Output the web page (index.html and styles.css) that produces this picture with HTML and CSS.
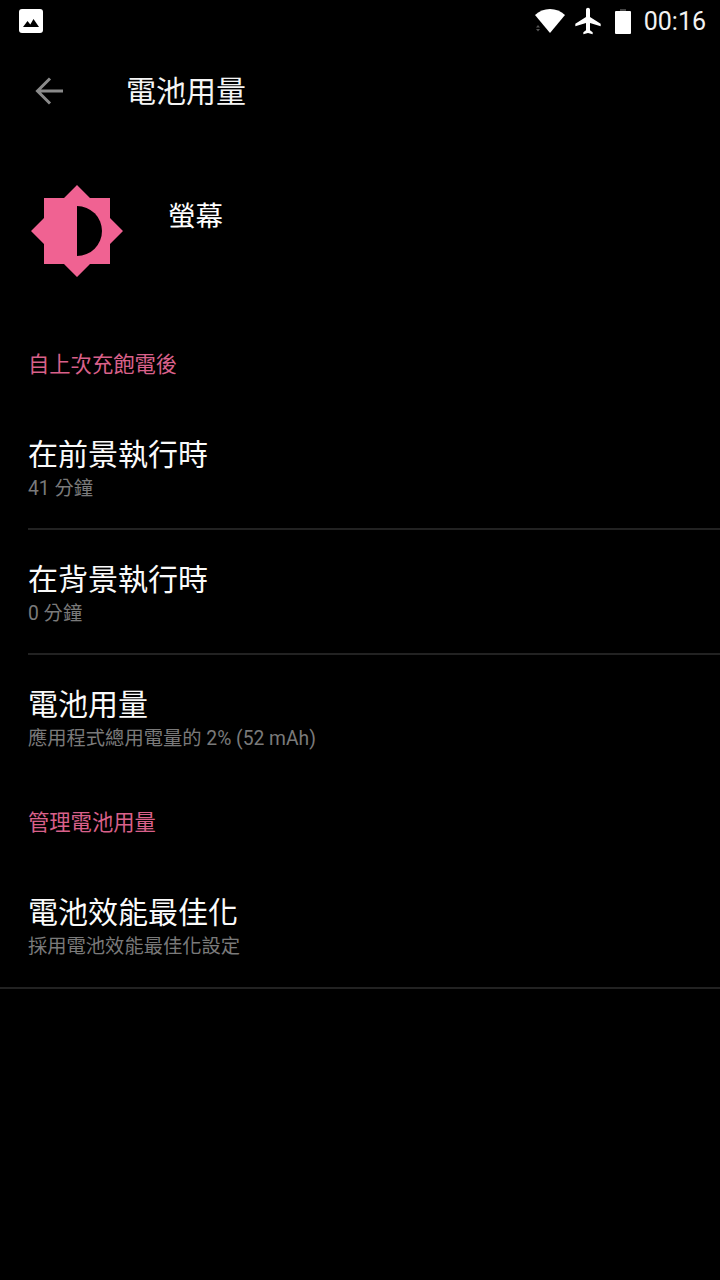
FILE: index.html
```html
<!DOCTYPE html>
<html lang="zh-Hant">
<head>
  <meta charset="UTF-8">
  <meta name="viewport" content="width=device-width, initial-scale=1.0">
  <title>電池用量</title>
  <link rel="stylesheet" href="styles.css">
</head>
<body>

  <div class="status-bar">
    <svg class="icon-picture" width="24" height="24" viewBox="0 0 24 24">
      <path fill="#fff" d="M3 0h18a3 3 0 0 1 3 3v18a3 3 0 0 1-3 3H3a3 3 0 0 1-3-3V3a3 3 0 0 1 3-3z"/>
      <path fill="#000" d="M4 18l4.500-6 2.800 3.400 3.200-5.400 5.500 8z"/>
    </svg>
    <div class="status-right">
      <svg class="icon-wifi" width="30" height="24" viewBox="0 0 30 24">
        <path fill="#fff" d="M0 6C4 2.300 9.300 0 15 0s11 2.300 15 6L15 24z"/>
        <path fill="#555" d="M1 18.500l2-2.500 2 2.500zM1 20h4l-2 2.500z"/>
      </svg>
      <svg class="icon-plane" width="32" height="32" viewBox="0 0 24 24">
        <path fill="#fff" d="M21.500 16v-2L13.500 9V3.500C13.500 2.670 12.830 2 12 2s-1.500.67-1.500 1.500V9l-8 5v2l8-2.500V19l-2 1.500V22l3.500-1 3.500 1v-1.500L13.500 19v-5.500z"/>
      </svg>
      <svg class="icon-battery" width="16" height="25" viewBox="0 0 16 25">
        <path fill="#444" d="M5 0h6v2H5z"/>
        <path fill="#fff" d="M1 2h14a1 1 0 0 1 1 1v21a1 1 0 0 1-1 1H1a1 1 0 0 1-1-1V3a1 1 0 0 1 1-1z"/>
      </svg>
      <span class="clock">00:16</span>
    </div>
  </div>

  <div class="toolbar">
    <svg class="icon-back" width="29" height="28" viewBox="0 0 29 28">
      <path fill="none" stroke="#8a8a8a" stroke-width="3" d="M28 14H3M15 1.500L2.500 14 15 26.500"/>
    </svg>
    <h1 class="toolbar-title">電池用量</h1>
  </div>

  <div class="app-header">
    <svg class="app-icon" width="92" height="92" viewBox="0 0 92 92">
      <path fill="#f06292" d="M46 0l13 13h20v20l13 13-13 13v20H59L46 92 33 79H13V59L0 46l13-13V13h20z"/>
      <path fill="#000" d="M46 21a25 25 0 0 1 0 50z"/>
    </svg>
    <div class="app-name">螢幕</div>
  </div>

  <div class="section-title first">自上次充飽電後</div>

  <div class="row">
    <div class="row-title">在前景執行時</div>
    <div class="row-sub">41 分鐘</div>
  </div>
  <div class="row">
    <div class="row-title">在背景執行時</div>
    <div class="row-sub">0 分鐘</div>
  </div>
  <div class="row last">
    <div class="row-title">電池用量</div>
    <div class="row-sub">應用程式總用電量的 2% (52 mAh)</div>
  </div>

  <div class="section-title">管理電池用量</div>

  <div class="row full">
    <div class="row-title">電池效能最佳化</div>
    <div class="row-sub">採用電池效能最佳化設定</div>
  </div>

</body>
</html>
```

FILE: styles.css
```css
body {
  margin: 0;
  height: 1280px;
  overflow: hidden;
  background-color: #000;
  color: #fff;
  font-family: Roboto, "Noto Sans CJK TC", sans-serif;
}

.status-bar {
  height: 42px;
  display: flex;
  align-items: center;
  justify-content: space-between;
  padding: 0 14px 0 19px;
}

.status-right {
  display: flex;
  align-items: center;
}

.icon-wifi {
  margin-right: 7px;
}

.icon-plane {
  margin-right: 11px;
}

.icon-battery {
  margin-right: 13px;
}

.clock {
  font-size: 25px;
  color: #f2f2f2;
}

.toolbar {
  height: 98px;
  display: flex;
  align-items: center;
  padding-left: 35px;
}

.icon-back {
  margin-right: 62px;
}

.toolbar-title {
  margin: 0 0 4px;
  font-size: 30px;
  font-weight: 400;
  color: #f5f5f5;
}

.app-header {
  display: flex;
  align-items: flex-start;
  padding: 45px 0 0 31px;
}

.app-name {
  margin: 12px 0 0 45px;
  font-size: 27.500px;
  line-height: 40px;
}

.section-title {
  margin: 0 0 0 28px;
  padding-top: 41px;
  font-size: 21.300px;
  line-height: 32px;
  color: #d9608a;
}

.section-title.first {
  padding-top: 72px;
}

.row {
  margin-left: 28px;
  height: 125px;
  box-sizing: border-box;
  padding-top: 28px;
  border-bottom: 2px solid #222;
}

.section-title + .row {
  margin-top: 24px;
}

.row.last {
  border-bottom: none;
  height: 111px;
}

.row.full {
  margin-left: 0;
  padding-left: 28px;
  height: 126px;
}

.row-title {
  font-size: 30px;
  line-height: 44px;
  color: #fafafa;
}

.row-sub {
  font-size: 19.300px;
  line-height: 22px;
  margin-top: 1px;
  color: #7a7a7a;
}
```
